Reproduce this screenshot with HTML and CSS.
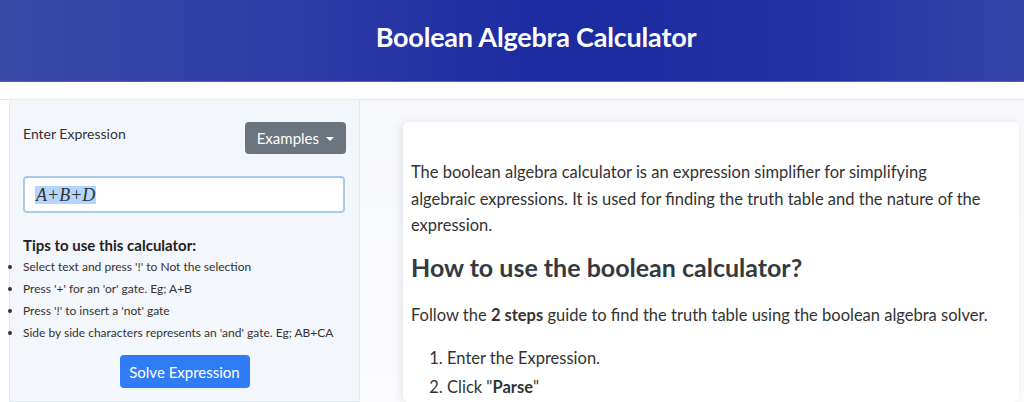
FILE: index.html
```html
<!DOCTYPE html>
<html lang="en">
<head>
<meta charset="utf-8">
<title>Boolean Algebra Calculator</title>
<link rel="stylesheet" href="styles.css">
</head>
<body>
<header class="hero">
  <h1 class="hero-title">Boolean Algebra Calculator</h1>
</header>
<main class="layout">
  <section class="panel">
    <div class="panel-head">
      <label class="panel-label">Enter Expression</label>
      <button class="btn btn-gray">Examples <span class="caret"></span></button>
    </div>
    <div class="expr-input"><span class="expr-sel">A+B+D</span></div>
    <h3 class="tips-title">Tips to use this calculator:</h3>
    <ul class="tips">
      <li>Select text and press '!' to Not the selection</li>
      <li>Press '+' for an 'or' gate. Eg; A+B</li>
      <li>Press '!' to insert a 'not' gate</li>
      <li>Side by side characters represents an 'and' gate. Eg; AB+CA</li>
    </ul>
    <div class="solve-row">
      <button class="btn btn-blue">Solve Expression</button>
    </div>
  </section>
  <section class="content">
    <article class="card">
      <p>The boolean algebra calculator is an expression simplifier for simplifying algebraic expressions. It is used for finding the truth table and the nature of the expression.</p>
      <h2 class="card-h2">How to use the boolean calculator?</h2>
      <p>Follow the <strong>2 steps</strong> guide to find the truth table using the boolean algebra solver.</p>
      <ol class="steps">
        <li>Enter the Expression.</li>
        <li>Click "<strong>Parse</strong>"</li>
      </ol>
    </article>
  </section>
</main>
</body>
</html>
```
FILE: styles.css
```css
* { box-sizing: border-box; }
html, body { margin: 0; padding: 0; }
body {
  font-family: Lato, "Open Sans", "Liberation Sans", sans-serif;
  color: #333;
  background: #fff;
  height: 402px;
  overflow: hidden;
}
.hero {
  height: 82px;
  background: linear-gradient(90deg, #3b4aa7 0%, #2c3ba6 30%, #1b2a9f 55%, #2333a4 80%, #3444a8 100%);
  border-bottom: 1px solid #5360b6;
  display: flex;
  align-items: center;
  justify-content: center;
  padding-left: 48px;
}
.hero-title {
  margin: 0;
  color: #fff;
  font-size: 27px;
  font-weight: 700;
  letter-spacing: -0.2px;
  padding-bottom: 8px;
}
.layout {
  margin-top: 17px;
  border-top: 1px solid #e6e8ee;
  display: grid;
  grid-template-columns: 351px 1fr;
  padding-left: 9px;
  height: 303px;
}
.panel {
  background: #f3f6fb;
  border: 1px solid #e3e7ee;
  border-top: none;
  border-radius: 4px 0 0 0;
  padding: 22px 13px 0 13px;
}
.panel-head {
  display: flex;
  justify-content: space-between;
  align-items: flex-start;
}
.panel-label {
  font-size: 14px;
  color: #333;
  margin-top: 3px;
}
.btn {
  font-family: inherit;
  border: none;
  border-radius: 4px;
  color: #fff;
  font-size: 15px;
  cursor: pointer;
}
.btn-gray {
  background: #6c757d;
  height: 32px;
  padding: 0 12px;
  display: flex;
  align-items: center;
  gap: 7px;
}
.caret {
  width: 0;
  height: 0;
  border-left: 4px solid transparent;
  border-right: 4px solid transparent;
  border-top: 4px solid #fff;
  margin-top: 1px;
}
.expr-input {
  margin-top: 22px;
  height: 37px;
  width: 322px;
  background: #fff;
  border: 2px solid #a9c9e9;
  border-radius: 4px;
  padding: 0 0 0 10px;
  display: flex;
  align-items: center;
  font-family: "Liberation Serif", "Times New Roman", serif;
  font-style: italic;
  font-size: 18px;
  color: #333;
}
.expr-sel {
  background: #b4d5fd;
  padding: 0 1px;
  line-height: 18px;
}
.tips-title {
  margin: 23px 0 2px 0;
  font-size: 15px;
  font-weight: 700;
  color: #222;
}
.tips {
  margin: 0;
  padding: 0;
  font-size: 12px;
  color: #333;
}
.tips li {
  line-height: 22px;
}
.solve-row {
  display: flex;
  justify-content: center;
  margin-top: 11px;
}
.btn-blue {
  background: #2f7cf6;
  height: 33px;
  width: 130px;
  padding: 0;
}
.content {
  background: linear-gradient(180deg, #f7f8fc 0%, #fbfbfd 100%);
  padding: 22px 5px 0 43px;
}
.card {
  background: #fff;
  border-radius: 6px;
  box-shadow: -4px 0 10px rgba(0, 0, 0, 0.05), 0 0 6px rgba(0, 0, 0, 0.04);
  padding: 37px 31px 0 8px;
  height: 100%;
  font-size: 16.5px;
  color: #333;
}
.card p {
  margin: 0;
  line-height: 26.5px;
}
.card-h2 {
  margin: 13px 0 20px 0;
  font-size: 25px;
  font-weight: 700;
  color: #343a40;
  line-height: 1.2;
}
.steps {
  margin: 16px 0 0 0;
  padding-left: 36px;
}
.steps li {
  line-height: 29px;
}
```
